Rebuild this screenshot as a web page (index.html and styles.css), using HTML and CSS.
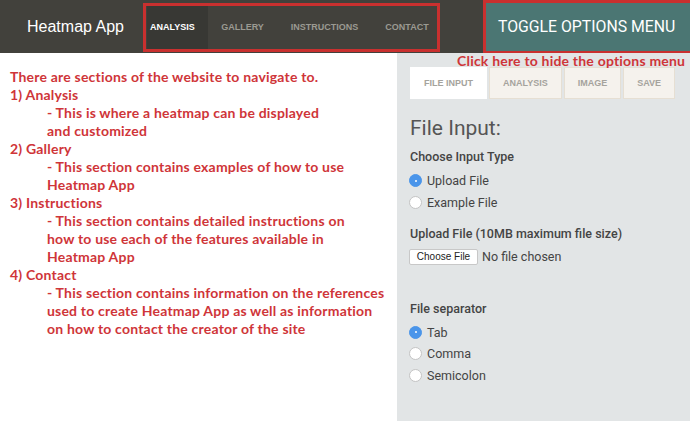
FILE: index.html
```html
<!DOCTYPE html>
<html>
<head>
<meta charset="utf-8">
<link rel="stylesheet" href="styles.css">
</head>
<body>
<header class="topbar">
  <div class="brand">Heatmap App</div>
  <nav class="nav">
    <a class="nav-item active">ANALYSIS</a>
    <a class="nav-item">GALLERY</a>
    <a class="nav-item">INSTRUCTIONS</a>
    <a class="nav-item last">CONTACT</a>
  </nav>
  <div class="spacer"></div>
  <button class="toggle">TOGGLE OPTIONS MENU</button>
</header>
<main class="main">
  <section class="notes">
    <div class="line">There are sections of the website to navigate to.</div>
    <div class="line">1) Analysis</div>
    <div class="desc">- This is where a heatmap can be displayed<br>and customized</div>
    <div class="line">2) Gallery</div>
    <div class="desc">- This section contains examples of how to use<br>Heatmap App</div>
    <div class="line">3) Instructions</div>
    <div class="desc">- This section contains detailed instructions on<br>how to use each of the features available in<br>Heatmap App</div>
    <div class="line">4) Contact</div>
    <div class="desc">- This section contains information on the references<br>used to create Heatmap App as well as information<br>on how to contact the creator of the site</div>
  </section>
  <aside class="panel">
    <div class="hint">Click here to hide the options menu</div>
    <div class="tabs">
      <div class="tab active">FILE INPUT</div>
      <div class="tab">ANALYSIS</div>
      <div class="tab">IMAGE</div>
      <div class="tab">SAVE</div>
    </div>
    <h2 class="heading">File Input:</h2>
    <div class="label">Choose Input Type</div>
    <div class="radio-row"><span class="radio checked"></span>Upload File</div>
    <div class="radio-row"><span class="radio"></span>Example File</div>
    <div class="label label-upload">Upload File (10MB maximum file size)</div>
    <div class="file-row"><span class="file-btn">Choose File</span><span class="file-text">No file chosen</span></div>
    <div class="label label-sep">File separator</div>
    <div class="radio-row"><span class="radio checked"></span>Tab</div>
    <div class="radio-row"><span class="radio"></span>Comma</div>
    <div class="radio-row"><span class="radio"></span>Semicolon</div>
  </aside>
</main>
</body>
</html>
```
FILE: styles.css
```css
html, body {
  margin: 0;
  padding: 0;
  background: #ffffff;
  overflow: hidden;
}
body {
  width: 690px;
  height: 422px;
}
.topbar {
  display: flex;
  align-items: flex-start;
  height: 53px;
  background: #42413c;
}
.brand {
  font-family: "Liberation Sans", Arial, sans-serif;
  font-size: 16px;
  color: #ffffff;
  padding-left: 27px;
  width: 116px;
  line-height: 53px;
  height: 53px;
}
.nav {
  display: flex;
  margin-top: 3px;
  height: 43px;
  border: 3px solid #c9302f;
  padding-left: 1px;
  width: 290px;
}
.nav-item {
  font-family: "Liberation Sans", Arial, sans-serif;
  font-weight: bold;
  font-size: 9px;
  color: #9b9a92;
  line-height: 43px;
  padding: 0 13.5px;
}
.nav-item.active {
  color: #ffffff;
  background: #383834;
  padding: 0 13px 0 3px;
}
.spacer {
  flex: 1;
}
.toggle {
  width: 210px;
  height: 54px;
  margin-right: -3px;
  border: 3px solid #c9302f;
  background: #4b7673;
  color: #ffffff;
  font-family: Roboto, sans-serif;
  font-size: 15.8px;
  padding: 0 0 2px 12px;
  text-align: left;
}
.main {
  display: flex;
  height: 369px;
}
.notes {
  width: 387px;
  padding: 15px 0 0 10px;
  font-family: Lato, "Open Sans", sans-serif;
  font-weight: bold;
  font-size: 14px;
  line-height: 18px;
  letter-spacing: 0.2px;
  color: #cf3539;
}
.desc {
  padding-left: 37px;
}
.panel {
  position: relative;
  flex: 1;
  background: #e2e5e6;
  padding: 14px 0 0 13px;
  height: 354px;
  font-family: Roboto, sans-serif;
  color: #454545;
}
.hint {
  position: absolute;
  left: 60px;
  top: 1px;
  font-family: Lato, "Open Sans", sans-serif;
  font-weight: bold;
  font-size: 14px;
  line-height: 14px;
  letter-spacing: 0.2px;
  color: #cf3539;
  white-space: nowrap;
}
.tabs {
  display: flex;
  gap: 2px;
}
.tab {
  font-family: "Liberation Sans", Arial, sans-serif;
  font-weight: bold;
  font-size: 9px;
  color: #a5a39d;
  height: 30px;
  line-height: 30px;
  padding: 0 13px;
  background: #f5f2ed;
  border: 1px solid #e6dfd3;
}
.tab.active {
  background: #ffffff;
  border-color: #ffffff;
}
.heading {
  margin: 17px 0 0 0;
  font-size: 21px;
  font-weight: 400;
  line-height: 24px;
  color: #555555;
}
.label {
  margin-top: 8px;
  font-size: 12.5px;
  font-weight: 500;
  line-height: 18px;
  color: #444444;
}
.label-upload {
  margin-top: 12px;
}
.label-sep {
  margin-top: 32.5px;
}
.radio-row {
  display: flex;
  align-items: center;
  height: 21.5px;
  font-size: 12.5px;
  color: #444444;
}
.label + .radio-row {
  margin-top: 4px;
}
.radio {
  box-sizing: border-box;
  width: 13px;
  height: 13px;
  border-radius: 50%;
  background: #ffffff;
  border: 1px solid #c4c4c4;
  margin: 0 5px 0 -1px;
  position: relative;
}
.radio.checked {
  background: #4a95ea;
  border-color: #4a95ea;
}
.radio.checked::after {
  content: "";
  position: absolute;
  left: 4.5px;
  top: 4.5px;
  width: 2px;
  height: 2px;
  border-radius: 50%;
  background: #ffffff;
}
.file-row {
  display: flex;
  align-items: center;
  margin-top: 4px;
  height: 20px;
}
.file-btn {
  box-sizing: border-box;
  width: 69px;
  height: 16px;
  line-height: 14px;
  margin-left: -1px;
  background: #ffffff;
  border: 1px solid #c8c8c8;
  border-radius: 2px;
  font-family: "Liberation Sans", Arial, sans-serif;
  font-size: 10px;
  text-align: center;
  color: #222222;
}
.file-text {
  margin-left: 4px;
  font-size: 12.5px;
  color: #444444;
  position: relative;
  top: -1px;
}
```
